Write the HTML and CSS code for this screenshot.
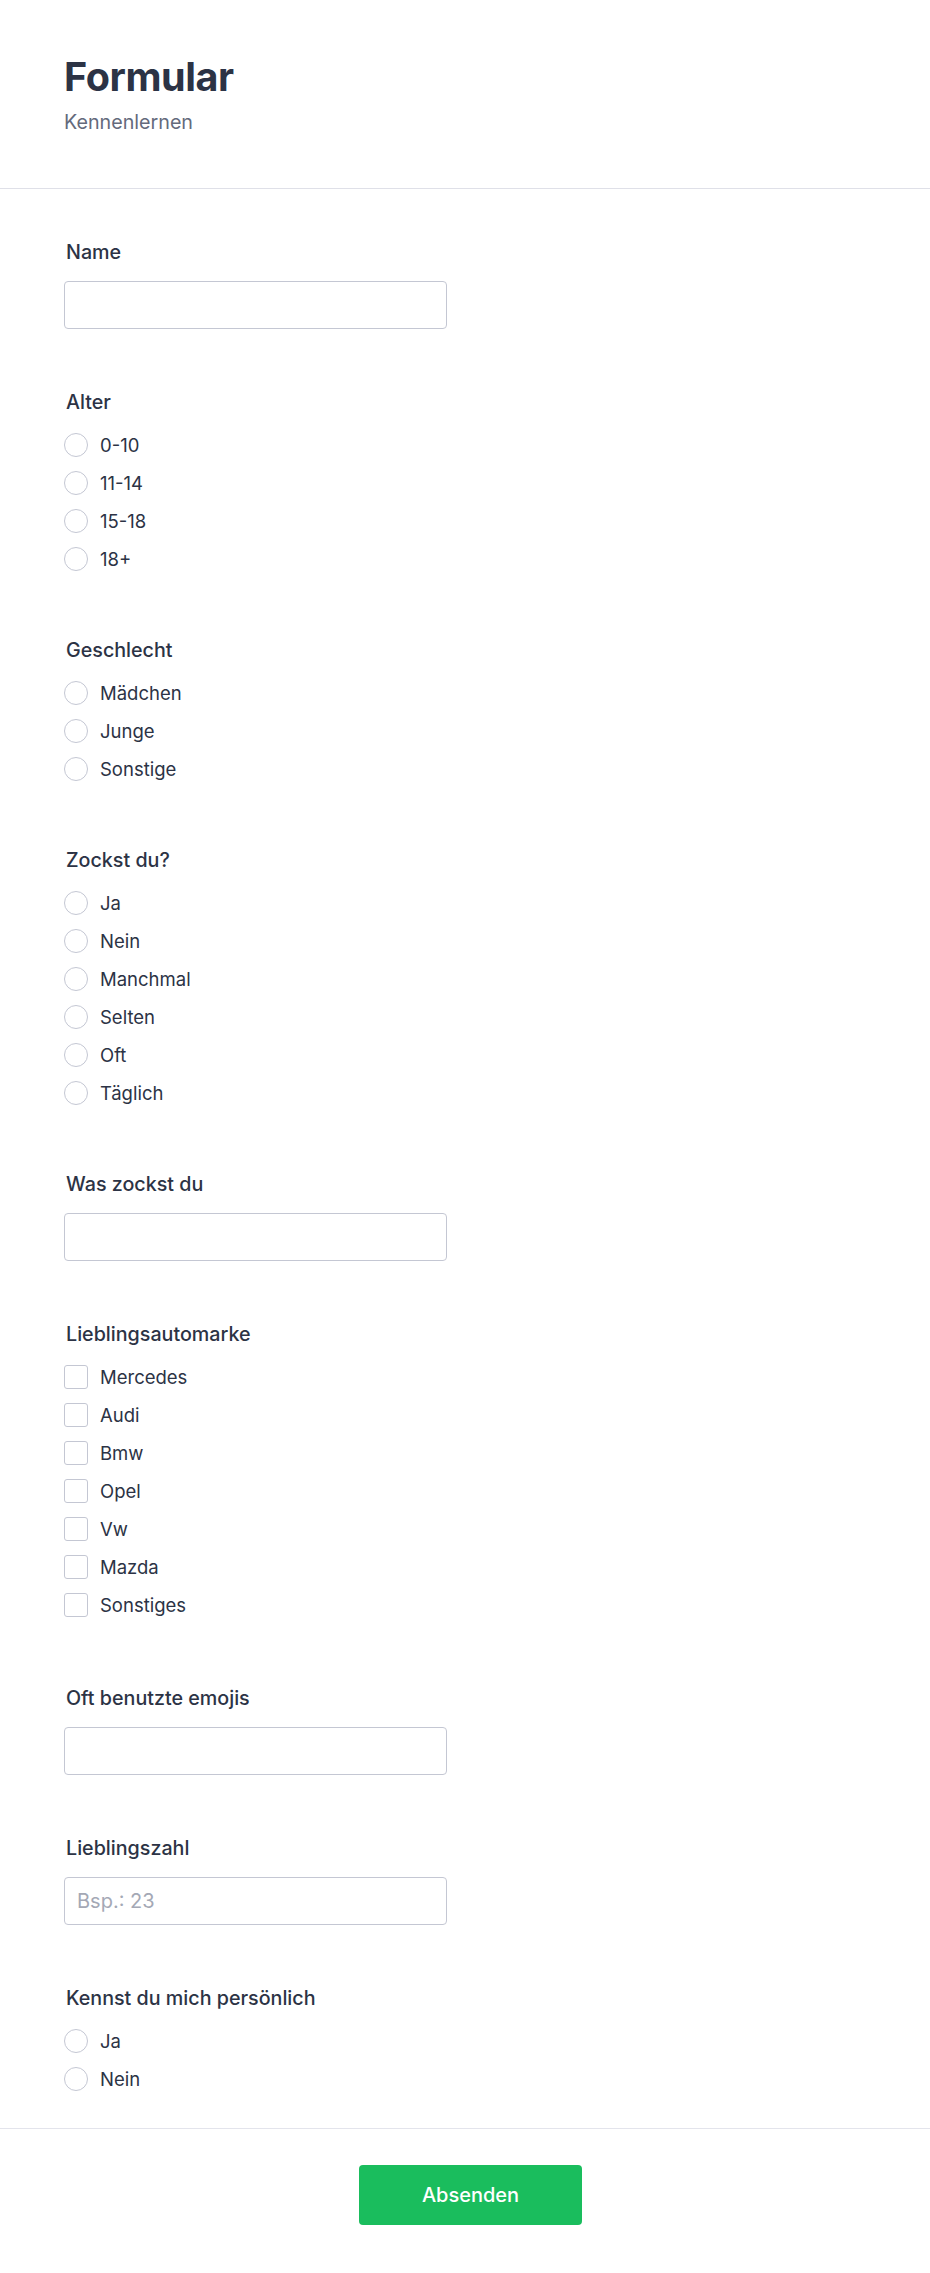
FILE: index.html
```html
<!DOCTYPE html>
<html lang="de">
<head>
<meta charset="utf-8">
<title>Formular</title>
<link rel="stylesheet" href="styles.css">
</head>
<body>
<div class="page">
  <header class="form-header">
    <h1 class="form-title">Formular</h1>
    <p class="form-subtitle">Kennenlernen</p>
  </header>

  <main class="form-body">
    <section class="field field-text">
      <label class="field-label" for="name">Name</label>
      <input class="text-input" id="name" type="text">
    </section>

    <section class="field">
      <div class="field-label">Alter</div>
      <ul class="options">
        <li class="option"><span class="radio"></span><span class="option-text">0-10</span></li>
        <li class="option"><span class="radio"></span><span class="option-text">11-14</span></li>
        <li class="option"><span class="radio"></span><span class="option-text">15-18</span></li>
        <li class="option"><span class="radio"></span><span class="option-text">18+</span></li>
      </ul>
    </section>

    <section class="field">
      <div class="field-label">Geschlecht</div>
      <ul class="options">
        <li class="option"><span class="radio"></span><span class="option-text">Mädchen</span></li>
        <li class="option"><span class="radio"></span><span class="option-text">Junge</span></li>
        <li class="option"><span class="radio"></span><span class="option-text">Sonstige</span></li>
      </ul>
    </section>

    <section class="field">
      <div class="field-label">Zockst du?</div>
      <ul class="options">
        <li class="option"><span class="radio"></span><span class="option-text">Ja</span></li>
        <li class="option"><span class="radio"></span><span class="option-text">Nein</span></li>
        <li class="option"><span class="radio"></span><span class="option-text">Manchmal</span></li>
        <li class="option"><span class="radio"></span><span class="option-text">Selten</span></li>
        <li class="option"><span class="radio"></span><span class="option-text">Oft</span></li>
        <li class="option"><span class="radio"></span><span class="option-text">Täglich</span></li>
      </ul>
    </section>

    <section class="field field-text">
      <label class="field-label" for="spiel">Was zockst du</label>
      <input class="text-input" id="spiel" type="text">
    </section>

    <section class="field field-checks">
      <div class="field-label">Lieblingsautomarke</div>
      <ul class="options">
        <li class="option"><span class="checkbox"></span><span class="option-text">Mercedes</span></li>
        <li class="option"><span class="checkbox"></span><span class="option-text">Audi</span></li>
        <li class="option"><span class="checkbox"></span><span class="option-text">Bmw</span></li>
        <li class="option"><span class="checkbox"></span><span class="option-text">Opel</span></li>
        <li class="option"><span class="checkbox"></span><span class="option-text">Vw</span></li>
        <li class="option"><span class="checkbox"></span><span class="option-text">Mazda</span></li>
        <li class="option"><span class="checkbox"></span><span class="option-text">Sonstiges</span></li>
      </ul>
    </section>

    <section class="field field-text">
      <label class="field-label" for="emojis">Oft benutzte emojis</label>
      <input class="text-input" id="emojis" type="text">
    </section>

    <section class="field field-text">
      <label class="field-label" for="zahl">Lieblingszahl</label>
      <input class="text-input" id="zahl" type="text" placeholder="Bsp.: 23">
    </section>

    <section class="field">
      <div class="field-label">Kennst du mich persönlich</div>
      <ul class="options">
        <li class="option"><span class="radio"></span><span class="option-text">Ja</span></li>
        <li class="option"><span class="radio"></span><span class="option-text">Nein</span></li>
      </ul>
    </section>
  </main>

  <footer class="form-footer">
    <button class="submit" type="button">Absenden</button>
  </footer>
</div>
</body>
</html>
```

FILE: styles.css
```css
* {
  box-sizing: border-box;
}

html, body {
  margin: 0;
  padding: 0;
  background: #ffffff;
}

body {
  font-family: Inter, "Noto Sans", "Liberation Sans", sans-serif;
  color: #2c3345;
}

.page {
  width: 930px;
  min-height: 2273px;
  display: flex;
  flex-direction: column;
}

.form-header {
  padding: 53px 64px 53px;
  border-bottom: 1px solid #dfe0e8;
}

.form-title {
  margin: 0;
  font-size: 39.5px;
  line-height: 48px;
  font-weight: 700;
  letter-spacing: -0.4px;
  color: #2c3345;
}

.form-subtitle {
  margin: 8px 0 0;
  font-size: 19.7px;
  line-height: 26px;
  font-weight: 400;
  color: #646a7c;
}

.form-body {
  padding: 49px 64px 30px;
  display: flex;
  flex-direction: column;
}

.field {
  display: flex;
  flex-direction: column;
  margin-bottom: 58px;
}

.field-text {
  margin-bottom: 59px;
}

.field-checks {
  margin-bottom: 60px;
}

.field:last-child {
  margin-bottom: 0;
}

.field-label {
  display: block;
  padding-left: 2px;
  font-size: 19.7px;
  line-height: 28px;
  font-weight: 500;
  color: #2c3345;
}

.text-input {
  margin-top: 15px;
  width: 383px;
  height: 48px;
  padding: 0 12px;
  border: 1px solid #c4c7d3;
  border-radius: 4px;
  background: #ffffff;
  font-family: inherit;
  font-size: 20px;
  color: #2c3345;
  outline: none;
}

.text-input::placeholder {
  color: #a4a8b5;
}

.options {
  list-style: none;
  margin: 10px 0 0;
  padding: 0;
}

.option {
  height: 38px;
  display: flex;
  align-items: center;
  gap: 12px;
}

.radio,
.checkbox {
  flex: none;
  width: 24px;
  height: 24px;
  border: 1px solid #c4c7d3;
  background: #ffffff;
}

.radio {
  border-radius: 50%;
}

.checkbox {
  border-radius: 3px;
}

.option-text {
  font-size: 18.5px;
  line-height: 26px;
  font-weight: 400;
  color: #2c3345;
}

.form-footer {
  flex: 1;
  border-top: 1px solid #e3e4ec;
  padding: 36px 53px 50px 64px;
  display: flex;
  justify-content: center;
  align-items: flex-start;
}

.submit {
  width: 223px;
  height: 60px;
  border: none;
  border-radius: 4px;
  background: #1abd5d;
  color: #ffffff;
  font-family: inherit;
  font-size: 20px;
  font-weight: 500;
  cursor: pointer;
}
```
